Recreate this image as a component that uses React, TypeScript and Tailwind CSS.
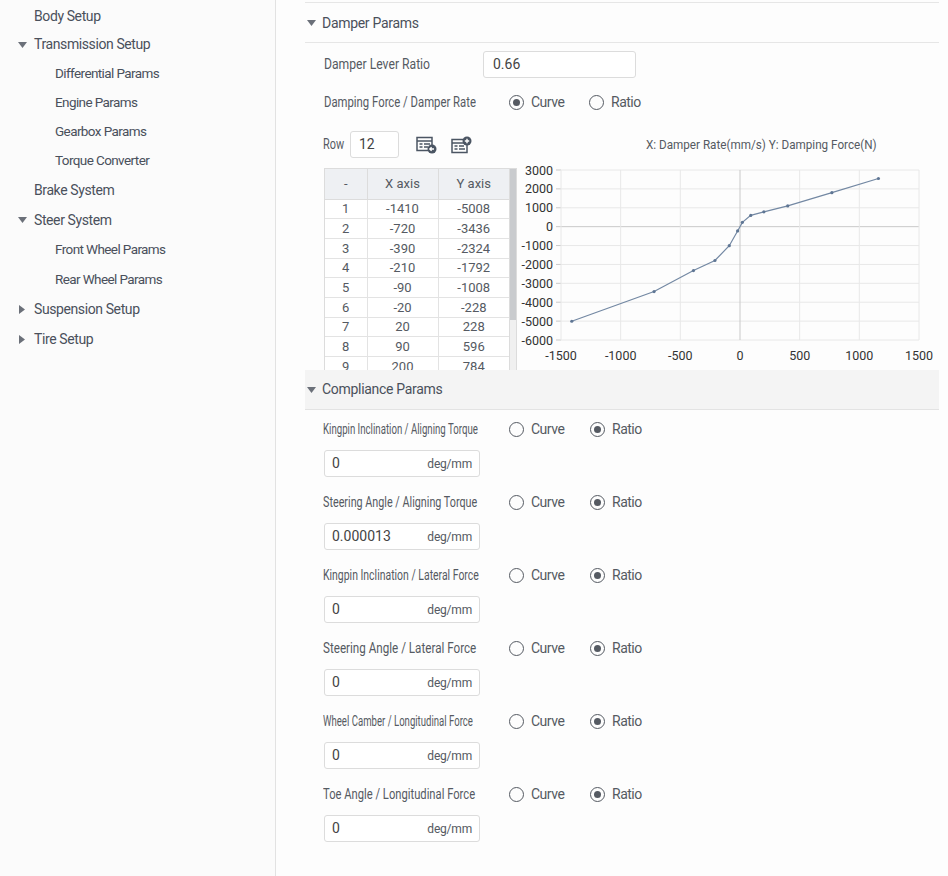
import React, { useLayoutEffect, useRef, useState } from "react";

const font = { fontFamily: "Roboto, 'Liberation Sans', sans-serif" };

type NavItem = { label: string; level: 0 | 1; arrow?: "down" | "right"; h: string };

const nav: NavItem[] = [
  { label: "Body Setup", level: 0, h: "h-[29px]" },
  { label: "Transmission Setup", level: 0, arrow: "down", h: "h-[28px]" },
  { label: "Differential Params", level: 1, h: "h-[29px]" },
  { label: "Engine Params", level: 1, h: "h-[29px]" },
  { label: "Gearbox Params", level: 1, h: "h-[29px]" },
  { label: "Torque Converter", level: 1, h: "h-[30px]" },
  { label: "Brake System", level: 0, h: "h-[30px]" },
  { label: "Steer System", level: 0, arrow: "down", h: "h-[29px]" },
  { label: "Front Wheel Params", level: 1, h: "h-[30px]" },
  { label: "Rear Wheel Params", level: 1, h: "h-[29px]" },
  { label: "Suspension Setup", level: 0, arrow: "right", h: "h-[31px]" },
  { label: "Tire Setup", level: 0, arrow: "right", h: "h-[29px]" },
];

const rows: [number, number][] = [
  [-1410, -5008],
  [-720, -3436],
  [-390, -2324],
  [-210, -1792],
  [-90, -1008],
  [-20, -228],
  [20, 228],
  [90, 596],
  [200, 784],
  [400, 1100],
  [770, 1800],
  [1160, 2550],
];

const compliance = [
  { label: "Kingpin Inclination / Aligning Torque", value: "0", width: 155 },
  { label: "Steering Angle / Aligning Torque", value: "0.000013", width: 154 },
  { label: "Kingpin Inclination / Lateral Force", value: "0", width: 156 },
  { label: "Steering Angle / Lateral Force", value: "0", width: 153 },
  { label: "Wheel Camber / Longitudinal Force", value: "0", width: 150 },
  { label: "Toe Angle / Longitudinal Force", value: "0", width: 152 },
];

// squeeze a label horizontally to the width it has in the design
const FitText = ({ text, width, className }: { text: string; width: number; className?: string }) => {
  const ref = useRef<HTMLSpanElement>(null);
  const [scale, setScale] = useState(1);
  useLayoutEffect(() => {
    if (ref.current) setScale(width / ref.current.offsetWidth);
  }, [text, width]);
  return (
    <span
      ref={ref}
      className={`inline-block whitespace-nowrap origin-left ${className ?? ""}`}
      style={{ transform: `scaleX(${scale})` }}
    >
      {text}
    </span>
  );
};

const Caret = ({ dir }: { dir: "down" | "right" }) =>
  dir === "down" ? (
    <svg width="9" height="6" viewBox="0 0 9 6" className="shrink-0">
      <path d="M0 0h9L4.5 6z" fill="#6b7079" />
    </svg>
  ) : (
    <svg width="6" height="9" viewBox="0 0 6 9" className="shrink-0">
      <path d="M0 0v9l6-4.5z" fill="#6b7079" />
    </svg>
  );

const Radio = ({ checked, label }: { checked?: boolean; label: string }) => (
  <div className="flex items-center gap-[7px]">
    <span className="w-[15px] h-[15px] rounded-full border-[1.5px] border-[#555a62] flex items-center justify-center">
      {checked && <span className="w-[7px] h-[7px] rounded-full bg-[#555a62]" />}
    </span>
    <span className="text-[14px] tracking-[-0.5px] text-[#555a62]">{label}</span>
  </div>
);

const TableIconA = () => (
  <svg width="22" height="18" viewBox="0 0 22 18">
    <rect x="1" y="1.5" width="15" height="13" fill="none" stroke="#4b5563" strokeWidth="1.5" />
    <path d="M1 5h15M3.5 8h3M8 8h6M3.5 11h3M8 11h4" stroke="#4b5563" strokeWidth="1.3" />
    <circle cx="16" cy="13" r="4.5" fill="#4b5563" />
    <path d="M18 13h-4m1.6-1.8L13.8 13l1.8 1.8" stroke="#fff" strokeWidth="1.3" fill="none" />
  </svg>
);

const TableIconB = () => (
  <svg width="22" height="18" viewBox="0 0 22 18">
    <rect x="1" y="3.5" width="15" height="13" fill="none" stroke="#4b5563" strokeWidth="1.5" />
    <path d="M1 7h15M3.5 10h3M8 10h5M3.5 13h3M8 13h6" stroke="#4b5563" strokeWidth="1.3" />
    <circle cx="16" cy="5" r="4.5" fill="#4b5563" />
    <path d="M16 2.8v4.4M13.8 5h4.4" stroke="#fff" strokeWidth="1.4" />
  </svg>
);

const Chart = () => {
  const x0 = 44;
  const x1 = 402;
  const yTop = 9;
  const yBot = 179;
  const sx = (v: number) => x0 + ((v + 1500) / 3000) * (x1 - x0);
  const sy = (v: number) => yTop + ((3000 - v) / 9000) * (yBot - yTop);
  const yTicks = [3000, 2000, 1000, 0, -1000, -2000, -3000, -4000, -5000, -6000];
  const xTicks = [-1500, -1000, -500, 0, 500, 1000, 1500];
  const pts = rows.map(([x, y]) => `${sx(x)},${sy(y)}`).join(" ");
  return (
    <svg width="422" height="209" viewBox="0 0 422 209" style={font}>
      {yTicks.map((t) => (
        <g key={t}>
          <line x1={x0} x2={x1} y1={sy(t)} y2={sy(t)} stroke={t === 0 ? "#c9c9c9" : "#e8e8e8"} />
          <line x1={x0 - 5} x2={x0} y1={sy(t)} y2={sy(t)} stroke="#c9c9c9" />
          <text x={x0 - 8} y={sy(t) + 4.5} textAnchor="end" fontSize="12.5" fill="#333">
            {t}
          </text>
        </g>
      ))}
      {xTicks.map((t) => (
        <g key={t}>
          <line x1={sx(t)} x2={sx(t)} y1={yTop} y2={yBot} stroke={t === 0 ? "#c9c9c9" : "#e8e8e8"} />
          <text x={sx(t)} y={199} textAnchor="middle" fontSize="12.5" fill="#333">
            {t}
          </text>
        </g>
      ))}
      <polyline points={pts} fill="none" stroke="#7388a3" strokeWidth="1.2" />
      {rows.map(([x, y]) => (
        <circle key={x} cx={sx(x)} cy={sy(y)} r="1.6" fill="#5f7694" />
      ))}
    </svg>
  );
};

export default function App() {
  return (
    <div className="flex w-[948px] h-[876px] bg-white overflow-hidden" style={font}>
      <aside className="w-[276px] shrink-0 border-r border-[#e2e2e2] bg-[#fbfbfb] pt-[1.5px]">
        {nav.map((n) => (
          <div key={n.label} className={`${n.h} flex items-center`}>
            {n.level === 0 ? (
              <div className="flex items-center">
                <span className="w-[34px] flex justify-center pl-[10px]">
                  {n.arrow && <Caret dir={n.arrow} />}
                </span>
                <span className="text-[14px] tracking-[-0.4px] text-[#4a505b]">{n.label}</span>
              </div>
            ) : (
              <span className="pl-[55px] text-[13.5px] tracking-[-0.6px] text-[#4a505b]">{n.label}</span>
            )}
          </div>
        ))}
      </aside>

      <main className="flex-1 pl-[29px] pr-[11px] bg-[#fdfdfd]">
        <div className="mt-[2px] border-t border-[#e6e6e6]" />
        <div className="h-[40px] flex items-center gap-[6px] pl-[2px] pt-[1px] border-b border-[#e6e6e6]">
          <Caret dir="down" />
          <span className="text-[14px] tracking-[-0.3px] text-[#4a505b]">Damper Params</span>
        </div>

        <div className="pl-[19px]">
          <div className="mt-[8px] h-[27px] flex items-center">
            <span className="w-[159px] text-[14px] text-[#555a62]">
              <FitText text="Damper Lever Ratio" width={106} />
            </span>
            <div className="w-[153px] h-[27px] border border-[#dcdcdc] rounded-[3px] bg-white flex items-center px-[9px] text-[14px] text-[#444]">
              0.66
            </div>
          </div>

          <div className="mt-[11px] h-[26px] flex items-center">
            <span className="w-[185px] text-[14px] text-[#555a62]">
              <FitText text="Damping Force / Damper Rate" width={152} />
            </span>
            <div className="w-[80px]">
              <Radio checked label="Curve" />
            </div>
            <Radio label="Ratio" />
          </div>

          <div className="mt-[16px] h-[27px] flex items-center">
            <span className="text-[14px] text-[#555a62] w-[26px] -ml-[1px] mr-[1px]">
              <FitText text="Row" width={21} />
            </span>
            <div className="w-[49px] h-[27px] border border-[#dcdcdc] rounded-[3px] bg-white flex items-center px-[8px] text-[14px] text-[#444]">
              12
            </div>
            <span className="ml-[17px]">
              <TableIconA />
            </span>
            <span className="ml-[13px]">
              <TableIconB />
            </span>
            <span className="ml-auto w-[293px] text-[13.5px] text-[#555a62]">
              <FitText text="X: Damper Rate(mm/s) Y: Damping Force(N)" width={231} />
            </span>
          </div>

          <div className="mt-[10px] flex h-[202px]">
            <div className="h-[202px] overflow-hidden flex border border-[#dcdcdc] border-b-0">
              <table className="w-[184px] border-collapse text-[13px] text-[#555a62] text-center">
                <thead>
                  <tr className="h-[30px] bg-[#eef0f3]">
                    <th className="w-[42px] font-normal border-r border-b border-[#dcdcdc]">-</th>
                    <th className="w-[71px] font-normal border-r border-b border-[#dcdcdc]">X axis</th>
                    <th className="font-normal border-b border-[#dcdcdc]">Y axis</th>
                  </tr>
                </thead>
                <tbody>
                  {rows.map(([x, y], i) => (
                    <tr key={i} className="h-[19.7px] bg-white">
                      <td className="border-r border-b border-[#e3e3e3] leading-none">{i + 1}</td>
                      <td className="border-r border-b border-[#e3e3e3] leading-none">{x}</td>
                      <td className="border-b border-[#e3e3e3] leading-none">{y}</td>
                    </tr>
                  ))}
                </tbody>
              </table>
              <div className="w-[7px] bg-[#f0f0f0] border-l border-[#dcdcdc]">
                <div className="h-[151px] bg-[#c9cbce]" />
              </div>
            </div>
            <div className="-mt-[7px]">
              <Chart />
            </div>
          </div>
        </div>

        <div className="h-[40px] flex items-center gap-[6px] pl-[2px] bg-[#f4f4f4] border-b border-[#e3e3e3]">
          <Caret dir="down" />
          <span className="text-[14px] tracking-[-0.3px] text-[#4a505b]">Compliance Params</span>
        </div>

        <div className="pl-[18px] pt-[9px]">
          {compliance.map((c) => (
            <div key={c.label} className="mb-[15px]">
              <div className="h-[20px] flex items-center">
                <span className="w-[186px] text-[14px] text-[#555a62]">
                  <FitText text={c.label} width={c.width} />
                </span>
                <div className="w-[81px]">
                  <Radio label="Curve" />
                </div>
                <Radio checked label="Ratio" />
              </div>
              <div className="mt-[11px] ml-[1px] w-[156px] h-[27px] border border-[#dcdcdc] rounded-[3px] bg-white flex items-center justify-between px-[7px]">
                <span className="text-[14px] text-[#444]">{c.value}</span>
                <span className="text-[12px] tracking-[-0.2px] text-[#555a62]">deg/mm</span>
              </div>
            </div>
          ))}
        </div>
      </main>
    </div>
  );
}
